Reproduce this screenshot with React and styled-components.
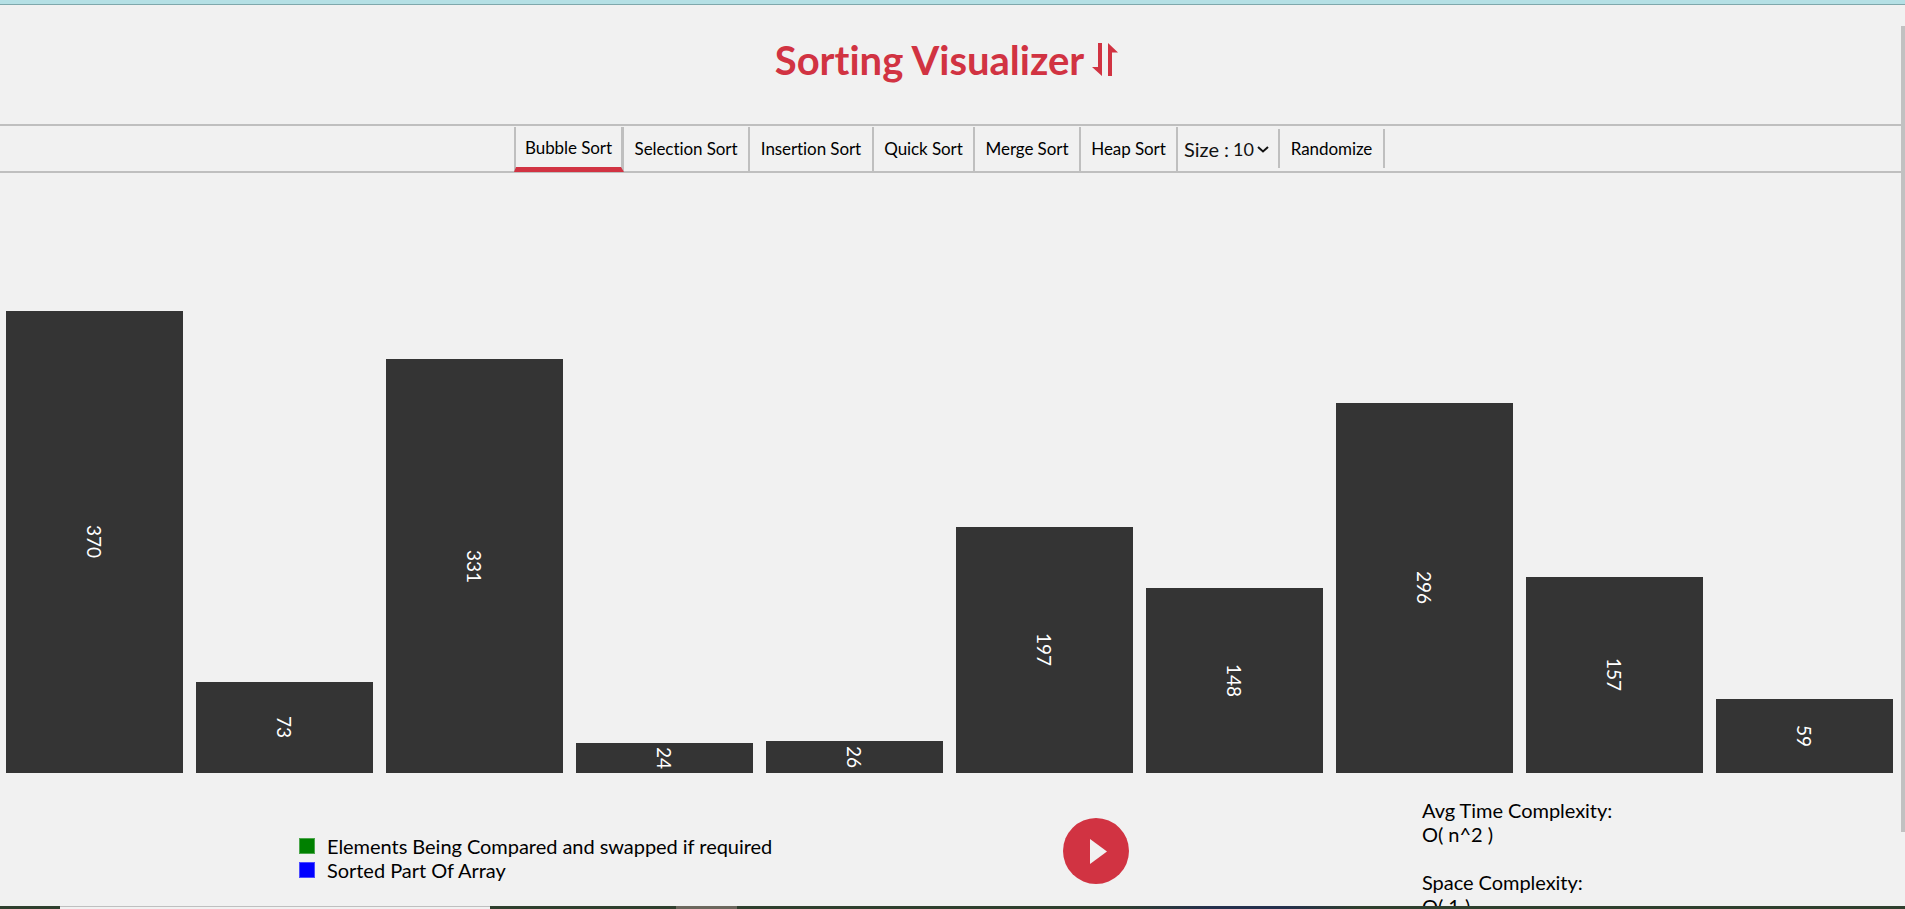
import React from 'react';
import styled, { createGlobalStyle } from 'styled-components';

const GlobalStyle = createGlobalStyle`
  html, body {
    margin: 0;
    padding: 0;
    height: 909px;
    overflow: hidden;
    background: #f1f1f1;
    font-family: Lato, "Liberation Sans", sans-serif;
    font-variant-ligatures: none;
  }
`;

const ALGORITHMS = [
  { name: 'Bubble Sort', width: 110 },
  { name: 'Selection Sort', width: 126 },
  { name: 'Insertion Sort', width: 124 },
  { name: 'Quick Sort', width: 101 },
  { name: 'Merge Sort', width: 106 },
  { name: 'Heap Sort', width: 97 },
];
const VALUES = [370, 73, 331, 24, 26, 197, 148, 296, 157, 59];

const App = () => (
  <Page>
    <GlobalStyle />
    <TopBand />
    <Title>
      Sorting Visualizer
      <SortIcon viewBox="0 0 26 33" aria-hidden="true">
        <path d="M6 0h4v33L0 24h6z" />
        <path d="M16 33V0l10 9.500h-6V33z" />
      </SortIcon>
    </Title>
    <Nav>
      {ALGORITHMS.map(({ name, width }, i) => (
        <Tab key={name} $width={width} $active={i === 0}>{name}</Tab>
      ))}
      <SizeSelect>
        Size :<SizeValue>10</SizeValue>
        <Chevron viewBox="0 0 12 7" aria-hidden="true">
          <path d="M1 1l5 4.500L11 1" />
        </Chevron>
      </SizeSelect>
      <Tab $width={105} $short>Randomize</Tab>
    </Nav>
    <Bars>
      {VALUES.map((value, i) => (
        <Bar key={i} style={{ height: value * 1.25 }}>
          <BarLabel>{value}</BarLabel>
        </Bar>
      ))}
    </Bars>
    <Footer>
      <Legend>
        <LegendRow><Swatch $color="#008000" $edge="#4ca64c" />Elements Being Compared and swapped if required</LegendRow>
        <LegendRow><Swatch $color="#0000ff" $edge="#4c4cff" />Sorted Part Of Array</LegendRow>
      </Legend>
      <PlayButton aria-label="Play">
        <svg width="17" height="25" viewBox="0 0 17 25" aria-hidden="true">
          <path d="M0 0l17 12.500L0 25z" fill="#f1f1f1" />
        </svg>
      </PlayButton>
      <Complexity>
        <div>Avg Time Complexity:</div>
        <div>O( n^2 )</div>
        <ComplexityGap />
        <div>Space Complexity:</div>
        <div>O( 1 )</div>
      </Complexity>
    </Footer>
    <ScrollThumb />
    <Taskbar>
      <TaskSegment $width={60} $color="#2f3f2e" />
      <TaskSegment $width={430} $color="#f1f1f1" $edge />
      <TaskSegment $width={186} $color="#2f3f2e" />
      <TaskSegment $width={61} $color="#6b675d" />
      <TaskSegment $width={378} $color="#2f3f2e" />
      <TaskSegment $width={243} $color="linear-gradient(90deg, #2f3f2e, #25304d 40%, #25304d 70%, #2f3f2e)" />
      <TaskSegment $grow $color="#2f3f2e" />
    </Taskbar>
  </Page>
);

export default App;

const Page = styled.div`
  position: relative;
  width: 1905px;
  height: 909px;
  overflow: hidden;
  background: #f1f1f1;
`;

const TopBand = styled.div`
  height: 4px;
  background: #b5e0e5;
  border-bottom: 1px solid #7fa8ac;
`;

const Title = styled.h1`
  display: flex;
  justify-content: center;
  align-items: center;
  gap: 8px;
  height: 119px;
  margin: 0;
  padding: 0 12px 10px 0;
  box-sizing: border-box;
  font-size: 40px;
  font-weight: 700;
  color: #d13342;
`;

const SortIcon = styled.svg`
  width: 26px;
  height: 33px;
  fill: #d13342;
`;

const Nav = styled.nav`
  display: flex;
  justify-content: center;
  align-items: flex-start;
  height: 49px;
  box-sizing: border-box;
  border-top: 2px solid #bfbfbf;
  border-bottom: 2px solid #bfbfbf;
  padding-right: 6px;
`;

const Tab = styled.div`
  display: flex;
  align-items: center;
  justify-content: center;
  flex: none;
  box-sizing: border-box;
  width: ${p => p.$width}px;
  height: ${p => (p.$active ? '45px' : p.$short ? '39px' : '44px')};
  margin-top: ${p => (p.$short ? '3px' : '1px')};
  padding-bottom: ${p => (p.$active || p.$short ? '0' : '2px')};
  border-right: ${p => (p.$active ? '3px' : '2px')} solid #bfbfbf;
  border-left: ${p => (p.$active ? '2px solid #bfbfbf' : '0')};
  border-bottom: ${p => (p.$active ? '5px solid #d13342' : '0')};
  font-size: 17px;
  letter-spacing: -0.08px;
  color: #000;
`;

const SizeSelect = styled.div`
  display: flex;
  align-items: center;
  flex: none;
  box-sizing: border-box;
  width: 102px;
  height: 39px;
  margin-top: 3px;
  padding-left: 6px;
  border-right: 2px solid #bfbfbf;
  font-size: 20px;
  color: #111;
`;

const SizeValue = styled.span`
  margin-left: 4px;
  font-size: 18px;
`;

const Chevron = styled.svg`
  width: 12px;
  height: 7px;
  margin: 1px 0 0 3px;
  fill: none;
  stroke: #111;
  stroke-width: 2;
`;

const Bars = styled.div`
  display: flex;
  align-items: flex-end;
  gap: 12.6px;
  height: 600px;
  padding-left: 6px;
`;

const Bar = styled.div`
  display: flex;
  align-items: center;
  justify-content: center;
  flex: none;
  width: 177.4px;
  background: #343434;
  overflow: hidden;
`;

const BarLabel = styled.span`
  writing-mode: vertical-rl;
  margin-right: 1px;
  font-size: 19px;
  color: #fff;
`;

const Footer = styled.div`
  display: grid;
  grid-template-columns: 299px 830px 1fr;
  height: 133px;
  overflow: hidden;
`;

const Legend = styled.div`
  grid-column: 1;
  grid-row: 1;
  margin-left: 299px;
  padding-top: 61px;
  width: 600px;
  font-size: 20px;
  line-height: 24px;
  letter-spacing: -0.04px;
  color: #000;
`;

const LegendRow = styled.div`
  display: flex;
  align-items: center;
`;

const Swatch = styled.span`
  flex: none;
  box-sizing: border-box;
  width: 16px;
  height: 16px;
  margin-right: 12px;
  background: ${p => p.$color};
  border: 1px solid ${p => p.$edge};
`;

const PlayButton = styled.div`
  grid-column: 2;
  grid-row: 1;
  justify-self: end;
  display: flex;
  align-items: center;
  justify-content: center;
  width: 66px;
  height: 66px;
  margin-top: 45px;
  padding-left: 4px;
  box-sizing: border-box;
  border-radius: 50%;
  background: #d13342;
`;

const Complexity = styled.div`
  grid-column: 3;
  grid-row: 1;
  margin-left: 293px;
  padding-top: 25px;
  font-size: 20px;
  line-height: 24px;
  letter-spacing: -0.04px;
  color: #000;
  white-space: nowrap;
`;

const ComplexityGap = styled.div`
  height: 24px;
`;

const ScrollThumb = styled.div`
  position: absolute;
  top: 26px;
  right: 0;
  width: 4px;
  height: 806px;
  background: #c1c1c1;
`;

const Taskbar = styled.div`
  position: absolute;
  left: 0;
  right: 0;
  bottom: 0;
  display: flex;
  height: 3px;
`;

const TaskSegment = styled.div`
  flex: ${p => (p.$grow ? '1' : `0 0 ${p.$width}px`)};
  background: ${p => p.$color};
  border-top: ${p => (p.$edge ? '1px solid #bfbfbf' : '0')};
`;
